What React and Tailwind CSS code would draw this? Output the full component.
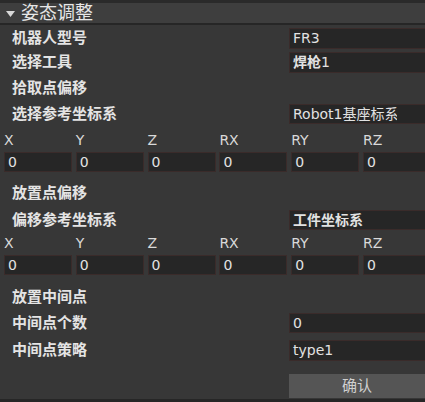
import React from 'react';

const font = { fontFamily: '"DejaVu Sans", "Noto Sans CJK SC", sans-serif' };

const Field = ({ value, className = '' }) => (
  <div
    className={`flex items-center h-full bg-[#262626] border border-[#3a2b2a] pl-[3px] text-[14px] text-[#e2e2e2] overflow-hidden whitespace-nowrap ${className}`}
  >
    {value}
  </div>
);

const Label = ({ children }) => (
  <span className="pl-[12px] text-[15px] font-bold text-[#e4e4e4] whitespace-nowrap">{children}</span>
);

const Row = ({ label, value, className }) => (
  <div className={`flex items-center ${className}`}>
    <div className="w-[289px] shrink-0 flex items-center">
      <Label>{label}</Label>
    </div>
    <div className="w-[140px] h-full shrink-0">
      <Field value={value} />
    </div>
  </div>
);

const axes = ['X', 'Y', 'Z', 'RX', 'RY', 'RZ'];

const AxisBlock = ({ labelTop, inputTop }) => (
  <>
    <div className={`flex gap-[3.8px] pl-[4px] h-[16px] ${labelTop}`}>
      {axes.map((a) => (
        <div key={a} className="w-[68px] shrink-0 text-[14px] leading-[16px] text-[#d9d9d9]">
          {a}
        </div>
      ))}
    </div>
    <div className={`flex gap-[3.8px] pl-[4px] h-[20px] ${inputTop}`}>
      {axes.map((a) => (
        <div key={a} className="w-[68px] h-full shrink-0">
          <Field value="0" />
        </div>
      ))}
    </div>
  </>
);

export default function App() {
  return (
    <div className="w-[425px] h-[402px] overflow-hidden bg-[#373737] flex flex-col" style={font}>
      <div className="h-[3px] bg-[#2a2a2a] shrink-0" />
      {/* Header */}
      <div className="h-[20px] shrink-0 bg-[#3e3e3e] flex items-center pl-[6px] gap-[6px] border-b-2 border-[#262626] box-content">
        <svg width="9" height="6" viewBox="0 0 9 6" className="mt-[1px]">
          <polygon points="0,0 9,0 4.5,6" fill="#d8d8d8" />
        </svg>
        <span className="text-[18px] text-[#e6e6e6] leading-none">姿态调整</span>
      </div>

      <div className="flex-1 flex flex-col">
        <Row label="机器人型号" value="FR3" className="mt-[3px] h-[21px]" />
        <Row
          label="选择工具"
          value={<span><span className="font-bold">焊枪</span>1</span>}
          className="mt-[3px] h-[21px]"
        />
        <div className="mt-[4px] h-[22px] flex items-center">
          <Label>拾取点偏移</Label>
        </div>
        <div className="flex items-center mt-[5px] h-[20px]">
          <div className="w-[289px] shrink-0 flex items-center">
            <Label>选择参考坐标系</Label>
          </div>
          <div className="w-[140px] h-full shrink-0">
            <Field value={<span className="block w-[104px] overflow-hidden">Robot1基座标系</span>} />
          </div>
        </div>
        <AxisBlock labelTop="mt-[8px]" inputTop="mt-[4px]" />

        <div className="mt-[10px] h-[22px] flex items-center">
          <Label>放置点偏移</Label>
        </div>
        <Row label="偏移参考坐标系" value={<span className="font-bold">工件坐标系</span>} className="mt-[6px] h-[20px]" />
        <AxisBlock labelTop="mt-[5px]" inputTop="mt-[4px]" />

        <div className="mt-[11px] h-[22px] flex items-center">
          <Label>放置中间点</Label>
        </div>
        <Row label="中间点个数" value="0" className="mt-[5px] h-[20px]" />
        <Row label="中间点策略" value="type1" className="mt-[7px] h-[21px]" />

        <div className="flex mt-[13px] h-[24px]">
          <div className="w-[289px] shrink-0" />
          <button className="w-[136px] h-full shrink-0 bg-[#555555] text-[15px] text-[#d0d0d0] flex items-center justify-center">
            确认
          </button>
        </div>
      </div>
      <div className="h-[3px] bg-[#262626] shrink-0" />
    </div>
  );
}
